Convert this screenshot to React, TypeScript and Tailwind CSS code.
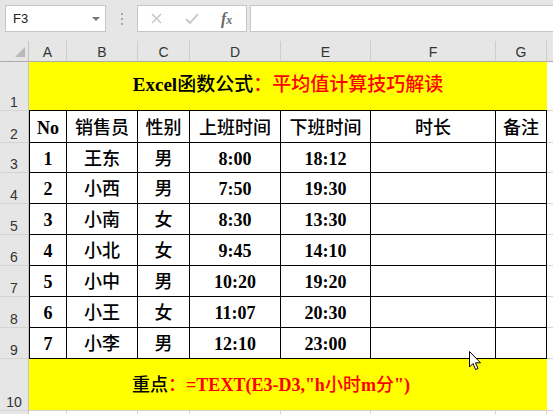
import React from "react";

const rows = [
  ["1", "王东", "男", "8:00", "18:12"],
  ["2", "小西", "男", "7:50", "19:30"],
  ["3", "小南", "女", "8:30", "13:30"],
  ["4", "小北", "女", "9:45", "14:10"],
  ["5", "小中", "男", "10:20", "19:20"],
  ["6", "小王", "女", "11:07", "20:30"],
  ["7", "小李", "男", "12:10", "23:00"],
];

const letters = ["A", "B", "C", "D", "E", "F", "G"];
const heads = ["No", "销售员", "性别", "上班时间", "下班时间", "时长", "备注"];

const serif = "font-['Liberation_Serif','Noto_Sans_CJK_SC',serif]";

// CJK glyphs come from a sans face, so keep them lighter than the bold latin
function Mixed({ text }: { text: string }) {
  return (
    <>
      {text.split(/([\u3000-\u9fff\uff00-\uffef]+)/).map((part, i) =>
        /[\u3000-\u9fff\uff00-\uffef]/.test(part) ? (
          <span key={i} className="font-medium">
            {part}
          </span>
        ) : (
          part
        )
      )}
    </>
  );
}

function RowHead({ n }: { n: string }) {
  return (
    <div className="flex items-end justify-center border-b border-r border-b-[#d4d4d4] border-r-[#c4c4c4] bg-[#e6e6e6] pb-[1px] text-[14px] leading-none text-[#333]">
      {n}
    </div>
  );
}

function Blank() {
  return <div className="border-b border-[#d4d4d4] bg-white" />;
}

function Cell({ text, first }: { text: string; first?: boolean }) {
  return (
    <div
      className={
        "flex items-center justify-center border-b border-r border-black bg-white pt-[2px] text-[18px] font-bold leading-none text-black " +
        serif +
        (first ? " border-l" : "")
      }
    >
      <Mixed text={text} />
    </div>
  );
}

function Cursor() {
  return (
    <svg className="absolute left-[469px] top-[351px]" width="13" height="20" viewBox="0 0 13 20">
      <path
        d="M0.5 0.5 L0.5 16 L4 12.5 L6.5 18.5 L9 17.5 L6.5 11.8 L11.5 11.8 Z"
        fill="#fff"
        stroke="#000"
        strokeWidth="1"
        strokeLinejoin="round"
      />
    </svg>
  );
}

export default function App() {
  return (
    <div className="relative h-[414px] w-[553px] overflow-hidden bg-[#e6e6e6] font-['Liberation_Sans','Noto_Sans_CJK_SC',sans-serif]">
      {/* formula bar */}
      <div className="flex h-[41px] items-start pl-[5px] pt-[5px]">
        <div className="flex h-[27px] w-[101px] items-center justify-between border border-[#c6c6c6] bg-white pl-[7px] pr-[5px]">
          <span className="text-[13px] text-[#222]">F3</span>
          <span className="h-0 w-0 border-x-[4px] border-t-[4px] border-x-transparent border-t-[#777]" />
        </div>
        <div className="flex h-[27px] w-[31px] flex-col items-center justify-center gap-[3px]">
          <span className="h-[2px] w-[2px] bg-[#a6a6a6]" />
          <span className="h-[2px] w-[2px] bg-[#a6a6a6]" />
          <span className="h-[2px] w-[2px] bg-[#a6a6a6]" />
        </div>
        <div className="flex h-[27px] w-[110px] items-center border border-[#c6c6c6] bg-white">
          <svg className="ml-[13px]" width="11" height="11" viewBox="0 0 11 11">
            <path d="M1 1 L10 10 M10 1 L1 10" stroke="#c4c4c4" strokeWidth="1.4" />
          </svg>
          <svg className="ml-[23px]" width="14" height="11" viewBox="0 0 14 11">
            <path d="M1 6 L5 10 L13 1" stroke="#c4c4c4" strokeWidth="1.8" fill="none" />
          </svg>
          <span className="ml-[22px] font-['Liberation_Serif',serif] text-[16px] font-bold italic leading-none text-[#6a6a6a]">
            f<span className="text-[12px]">x</span>
          </span>
        </div>
        <div className="ml-[3px] h-[27px] flex-1 border border-r-0 border-[#c6c6c6] bg-white" />
      </div>

      {/* sheet grid */}
      <div className="grid h-[373px] grid-cols-[29px_38px_71px_52px_91px_90px_125px_51px_1fr] grid-rows-[21px_49px_32px_30px_31px_31px_31px_31px_31px_31px_52px_1fr]">
        {/* column header */}
        <div className="relative border-b border-r border-b-[#ababab] border-r-[#c4c4c4] bg-[#e6e6e6]">
          <span className="absolute bottom-[4px] right-[3px] h-0 w-0 border-b-[10px] border-l-[10px] border-b-[#b9b9b9] border-l-transparent" />
        </div>
        {letters.map((l) => (
          <div
            key={l}
            className="flex items-center justify-center border-b border-r border-b-[#ababab] border-r-[#cdcdcd] bg-[#e6e6e6] pt-[2px] text-[14px] text-[#333]"
          >
            {l}
          </div>
        ))}
        <div className="border-b border-[#ababab] bg-[#e6e6e6]" />

        {/* row 1 */}
        <RowHead n="1" />
        <div className={"col-span-7 flex items-center justify-center border-b border-black bg-[#ffff00] pb-[1px] text-[19px] font-bold " + serif}>
          <span className="text-black">
            <Mixed text="Excel函数公式" />
          </span>
          <span className="font-medium text-[#ff0000]">：平均值计算技巧解读</span>
        </div>
        <Blank />

        {/* row 2 header */}
        <RowHead n="2" />
        {heads.map((h, i) => (
          <Cell key={h} text={h} first={i === 0} />
        ))}
        <Blank />

        {/* data rows */}
        {rows.map((r, ri) => (
          <React.Fragment key={ri}>
            <RowHead n={String(ri + 3)} />
            {r.map((v, ci) => (
              <Cell key={ci} text={v} first={ci === 0} />
            ))}
            <Cell text="" />
            <Cell text="" />
            <Blank />
          </React.Fragment>
        ))}

        {/* row 10 */}
        <RowHead n="10" />
        <div className={"col-span-7 flex items-center justify-center border-b border-[#d4d4d4] bg-[#ffff00] pr-[34px] pt-[2px] text-[18px] font-bold " + serif}>
          <span className="font-medium text-black">重点</span>
          <span className="text-[#ff0000]">
            <Mixed text={'：=TEXT(E3-D3,"h小时m分")'} />
          </span>
        </div>
        <Blank />

        {/* row 11 */}
        <div className="border-r border-[#c4c4c4] bg-[#e6e6e6]" />
        {letters.map((l) => (
          <div key={l} className="border-r border-[#d4d4d4] bg-white" />
        ))}
        <div className="bg-white" />
      </div>

      <Cursor />
    </div>
  );
}
